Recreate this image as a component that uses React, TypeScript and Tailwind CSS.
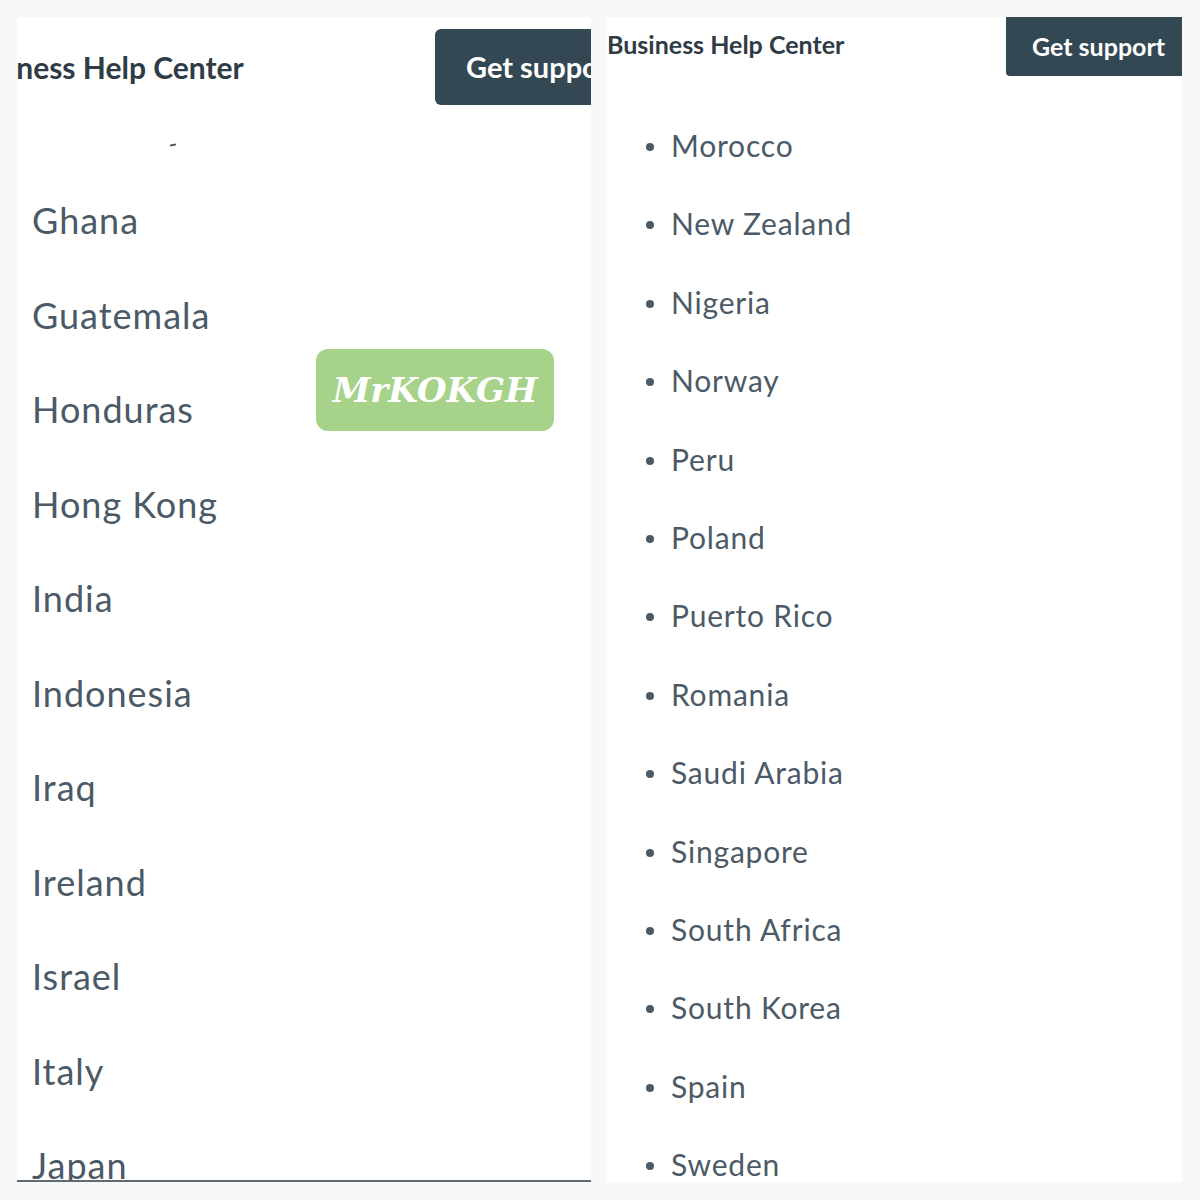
import React from "react";

const left = ["Ghana", "Guatemala", "Honduras", "Hong Kong", "India", "Indonesia", "Iraq", "Ireland", "Israel", "Italy", "Japan"];
const right = ["Morocco", "New Zealand", "Nigeria", "Norway", "Peru", "Poland", "Puerto Rico", "Romania", "Saudi Arabia", "Singapore", "South Africa", "South Korea", "Spain", "Sweden"];

export default function App() {
  return (
    <div className="w-[1200px] h-[1200px] bg-[#f8f8f8] flex gap-[16px] pl-[17px] pt-[17px] overflow-hidden" style={{ fontFamily: "Lato, 'Open Sans', sans-serif" }}>
      {/* Left panel */}
      <div className="relative w-[574px] h-[1165px] bg-white overflow-hidden flex flex-col">
        <div className="flex items-start justify-between h-[112px]">
          <div className="mt-[35px] -ml-[58px] text-[30px] font-bold text-[#2f3c45] leading-none whitespace-nowrap">Business Help Center</div>
          <div className="mt-[12px] -mr-[60px] h-[76px] w-[216px] rounded-[6px] bg-[#344854] text-white text-[29px] font-bold flex items-center pl-[31px] whitespace-nowrap">Get support</div>
        </div>
        <div className="absolute left-[153px] top-[127px] h-[2px] w-[6px] bg-[#3f4b55] -rotate-12"></div>
        <div className="flex flex-col pl-[15px] mt-[97px]">
          {left.map((c) => (
            <div key={c} className="h-[94.5px] text-[36px] text-[#4b5a66] leading-none tracking-[1px]">{c}</div>
          ))}
        </div>
        <div className="absolute left-0 right-0 bottom-0 h-[2px] bg-[#5f6b74]"></div>
        <div className="absolute left-[299px] top-[332px] w-[238px] h-[82px] rounded-[12px] bg-[#a6d389] flex items-center justify-center">
          <span className="text-white text-[34px] font-bold italic" style={{ fontFamily: "'DejaVu Serif', 'Liberation Serif', serif" }}>MrKOKGH</span>
        </div>
      </div>
      {/* Right panel */}
      <div className="w-[575px] h-[1165px] bg-white overflow-hidden flex flex-col">
        <div className="flex items-start justify-between">
          <div className="mt-[15px] text-[25px] font-bold text-[#2f3c45] leading-none whitespace-nowrap">Business Help Center</div>
          <div className="h-[59px] w-[176px] rounded-bl-[4px] bg-[#344854] text-white text-[25px] font-bold flex items-center pl-[26px] whitespace-nowrap">Get support</div>
        </div>
        <ul className="flex flex-col mt-[54px] pl-[39px]">
          {right.map((c) => (
            <li key={c} className="h-[78.4px] flex items-start text-[30px] text-[#4b5a66] leading-none tracking-[0.8px]">
              <span className="shrink-0 w-[8px] h-[8px] rounded-full bg-[#4b5a66] mt-[13px] mr-[17px]"></span>
              {c}
            </li>
          ))}
        </ul>
      </div>
    </div>
  );
}
